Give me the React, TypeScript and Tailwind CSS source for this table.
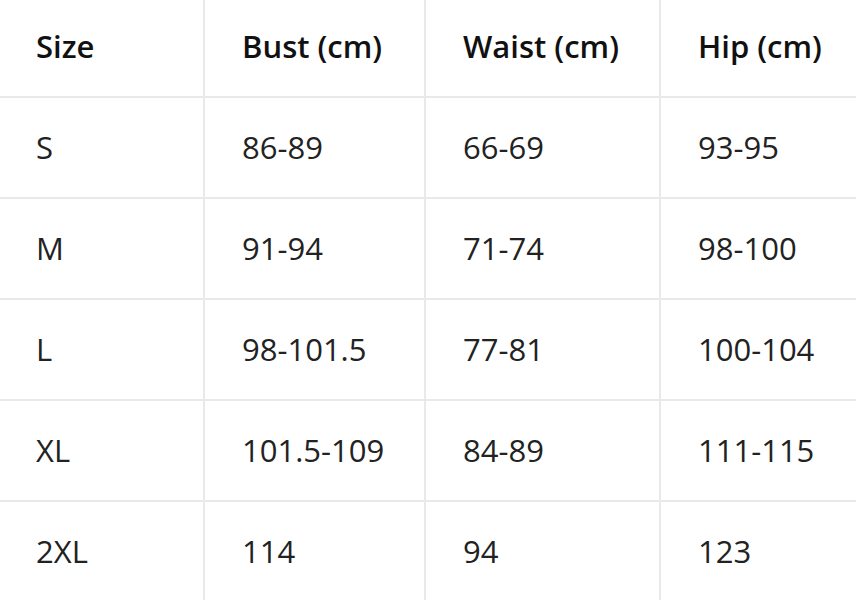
import React from "react";

const rows = [
  ["S", "86-89", "66-69", "93-95"],
  ["M", "91-94", "71-74", "98-100"],
  ["L", "98-101.5", "77-81", "100-104"],
  ["XL", "101.5-109", "84-89", "111-115"],
  ["2XL", "114", "94", "123"],
];

export default function App() {
  return (
    <div className="w-[856px] h-[600px] overflow-hidden bg-white">
      <table
        className="table-fixed border-collapse -ml-[3px] -mt-[5px] w-[906px] text-[31px] leading-none"
        style={{ fontFamily: '"Open Sans", "Noto Sans", sans-serif' }}
      >
        <colgroup>
          <col className="w-[206px]" />
          <col className="w-[221px]" />
          <col className="w-[235px]" />
          <col className="w-[244px]" />
        </colgroup>
        <thead>
          <tr>
            {["Size", "Bust (cm)", "Waist (cm)", "Hip (cm)"].map((h) => (
              <th
                key={h}
                className="h-[101px] border-2 border-[#e9e9e9] pl-[37px] pr-2 text-left font-semibold text-[#111]"
              >
                {h}
              </th>
            ))}
          </tr>
        </thead>
        <tbody>
          {rows.map((r) => (
            <tr key={r[0]}>
              {r.map((c, i) => (
                <td
                  key={i}
                  className="h-[101px] border-2 border-[#e9e9e9] pl-[37px] pr-2 text-left font-normal text-[#222]"
                >
                  {c}
                </td>
              ))}
            </tr>
          ))}
        </tbody>
      </table>
    </div>
  );
}
